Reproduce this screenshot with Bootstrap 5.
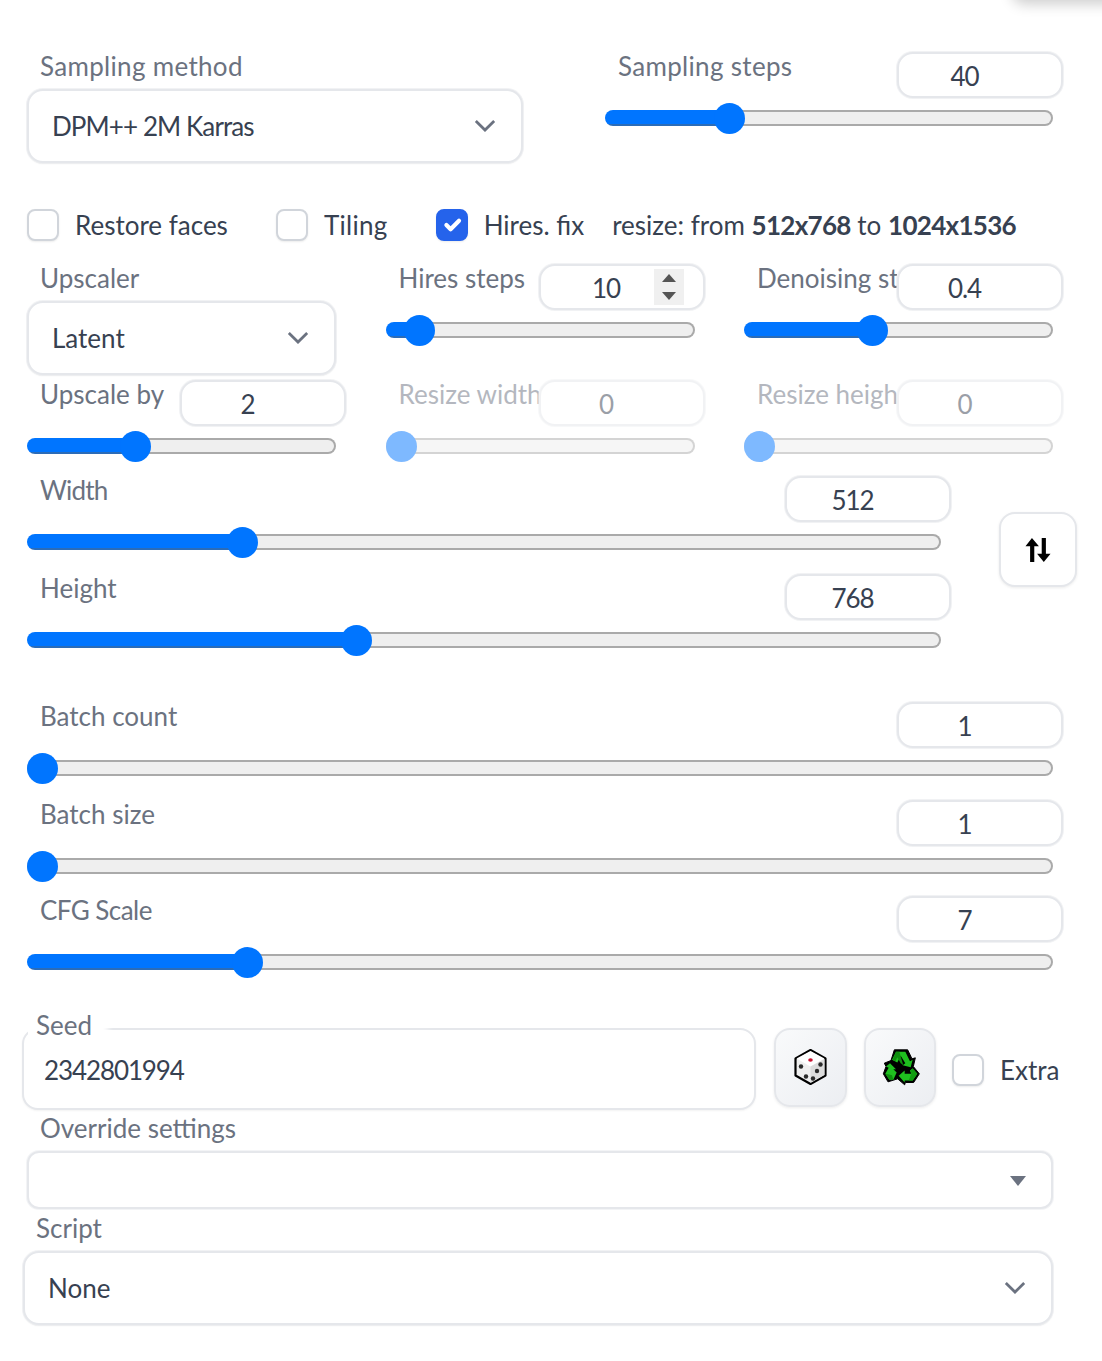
<!DOCTYPE html>
<html lang="en">
<head>
<meta charset="utf-8">
<title>txt2img settings</title>
<link href="https://cdn.jsdelivr.net/npm/bootstrap@5.3.0/dist/css/bootstrap.min.css" rel="stylesheet">
<style>
html,body{background:#fff;}
body{font-family:"Lato","Liberation Sans",sans-serif;font-size:26px;color:#374151;overflow:hidden;height:1361px;}
.pg{position:relative;width:1102px;height:1361px;padding:52px 0 0 27px;overflow:hidden;}
.corner-shade{position:absolute;top:-30px;right:-40px;width:130px;height:30px;box-shadow:0 4px 14px rgba(0,0,0,.2);background:#fff;border-radius:12px;}
.wrap{width:1026px;}
.lbl{display:block;font-size:26px;line-height:28px;color:#6b7280;margin:0;white-space:nowrap;}
.lbl-in{padding-left:13px;}
.cut{overflow:hidden;height:34px;}
.wide{letter-spacing:.32px;}
.narrow{letter-spacing:-.55px;}
.narrower{letter-spacing:-.8px;}
.sl-head{display:flex;height:46px;margin-right:-10px;}
.sl-head .lbl{flex:1 1 0;min-width:0;}
.numbox{position:relative;flex:0 0 166px;width:166px;}
.numf{display:block;width:166px;height:46px;padding:2px 31px 0 0;border:2px solid #e5e7eb;border-radius:16px;background:#fff;text-align:center;font-size:26px;letter-spacing:-1.1px;color:#374151;box-shadow:0 0 0 1px rgba(229,231,235,.55);outline:0;-moz-appearance:textfield;}
.numf::-webkit-inner-spin-button,.numf::-webkit-outer-spin-button{-webkit-appearance:none;margin:0;}
.spin{position:absolute;top:5px;right:21px;width:30px;height:36px;background:#f0f0f0;display:flex;align-items:center;justify-content:center;}
input.rng{display:block;width:100%;height:32px;margin-top:4px;padding:0;background:transparent;-webkit-appearance:none;appearance:none;}
input.rng::-webkit-slider-runnable-track{height:16px;box-sizing:border-box;border:2px solid transparent;border-radius:8px;background:linear-gradient(#0075ff calc(100% - 2px),#2b6cb8 calc(100% - 2px)) border-box 0 0/var(--p) 100% no-repeat,linear-gradient(#efefef,#efefef) padding-box,linear-gradient(#aaa,#aaa) border-box;}
input.rng::-webkit-slider-thumb{-webkit-appearance:none;appearance:none;width:31px;height:31px;margin-top:-9.5px;margin-left:-2px;border:0;border-radius:50%;background:#0075ff;box-shadow:none;}
input.rng:disabled::-webkit-slider-thumb{background:#0075ff;}
input.rng:disabled{pointer-events:none;}
.dis{opacity:.5;}
.selbox{display:block;height:74px;width:100%;padding:0 60px 0 23px;border:2px solid #e5e7eb;border-radius:16px;font-size:26px;color:#374151;box-shadow:0 0 0 1px rgba(229,231,235,.55),0 1px 2px rgba(0,0,0,.05);margin-top:9px;background-color:#fff;background-image:url("data:image/svg+xml,%3csvg xmlns='http://www.w3.org/2000/svg' viewBox='0 0 24 14'%3e%3cpath fill='none' stroke='%236b7280' stroke-width='3' d='M2 2l10 10L22 2'/%3e%3c/svg%3e");background-repeat:no-repeat;background-position:right 25px top 28px;background-size:22px 13px;}
.tight{letter-spacing:-.9px;}
.r1col{width:496px;}
.r1r{width:448px;}
.cbrow{display:flex;align-items:center;height:32px;margin-top:46px;}
.form-check-input.cb{width:32px;height:32px;margin:0;flex:none;border:2px solid #d1d5db;border-radius:8px;box-shadow:0 1px 2px rgba(0,0,0,.08);background-size:100%;}
.form-check-input.cb:checked{background-color:#2563eb;border-color:#2563eb;}
.cbt{margin:0 0 0 16px;font-size:26px;color:#374151;white-space:nowrap;}
.cbt b{font-weight:700;letter-spacing:-.7px;}
.c3{width:309px;flex:none;}
.r2{margin-top:23px;}
.r3{margin-top:5px;}
.r4{margin-top:14px;}
.mt16{margin-top:16px;}
.mt14{margin-top:14px;}
.sizecol{width:914px;flex:none;}
.swap{flex:none;width:78px;height:75px;margin:36px 0 0 58px;padding:0;background:#fff;border:2px solid #e5e7eb;border-radius:16px;box-shadow:0 1px 3px rgba(0,0,0,.08);display:flex;align-items:center;justify-content:center;}
.batch{margin-top:46px;}
.seedrow{display:flex;margin:50px 0 0 -5px;}
.seedwrap{position:relative;width:734px;flex:none;}
.seedlbl{position:absolute;left:6px;top:-17px;padding:0 10px 0 8px;height:28px;line-height:28px;background:#fff;color:#6b7280;font-size:26px;box-shadow:6px 0 6px #fff;}
.seedf{display:block;width:734px;height:82px;padding:2px 20px 0 20px;border:2px solid #e5e7eb;border-radius:16px;font-size:26px;letter-spacing:-1.1px;color:#374151;background:#fff;outline:0;box-shadow:0 1px 2px rgba(0,0,0,.05);}
.icbtn{flex:none;height:79px;padding:0;border:2px solid #e5e7eb;border-radius:16px;background:linear-gradient(to bottom right,#f9fafb,#eceef2);box-shadow:0 1px 3px rgba(0,0,0,.08);display:flex;align-items:center;justify-content:center;}
.ic1{width:73px;margin-left:18px;}
.ic2{width:72px;margin-left:17px;}
.extra{display:flex;align-items:center;height:32px;margin:26px 0 0 16px;flex:none;}
.ovr{height:58px;margin-top:9px;border:2px solid #e5e7eb;border-radius:12px;background:#fff;box-shadow:0 0 0 1px rgba(229,231,235,.45);display:flex;align-items:center;justify-content:flex-end;padding:2px 24px 0 0;}
.lbl-top{margin-top:4px;}
.lbl-script{margin:5px 0 0 9px;}
.scr{margin-left:-4px;width:1030px;}
</style>
</head>
<body>
<div class="pg">
  <div class="corner-shade"></div>
  <div class="wrap">
    <div class="d-flex justify-content-between">
      <div class="r1col">
        <label class="lbl lbl-in wide">Sampling method</label>
        <select class="form-select selbox tight"><option>DPM++ 2M Karras</option></select>
      </div>
      <div class="r1r">
        <div class="sl-head"><label class="lbl lbl-in wide">Sampling steps</label><div class="numbox"><input class="numf" type="number" value="40"></div></div>
        <input class="form-range rng" type="range" value="26.5" step="0.1" style="--p:28%">
      </div>
    </div>

    <div class="cbrow">
      <input class="form-check-input cb" type="checkbox" id="c1"><label class="cbt" for="c1">Restore faces</label>
      <input class="form-check-input cb ms-5" type="checkbox" id="c2"><label class="cbt wide" for="c2">Tiling</label>
      <input class="form-check-input cb ms-5" type="checkbox" id="c3" checked><label class="cbt" for="c3">Hires. fix</label>
      <span class="cbt ms-4 ps-1">resize: from <b>512x768</b> to <b>1024x1536</b></span>
    </div>

    <div class="d-flex justify-content-between r2">
      <div class="c3">
        <label class="lbl lbl-in">Upscaler</label>
        <select class="form-select selbox"><option>Latent</option></select>
      </div>
      <div class="c3">
        <div class="sl-head"><label class="lbl lbl-in">Hires steps</label><div class="numbox"><input class="numf" type="number" value="10">
          <span class="spin"><svg width="16" height="26" viewBox="0 0 16 26"><path fill="#555" d="M8 0l7 8H1zM1 18h14l-7 8z"/></svg></span></div></div>
        <input class="form-range rng" type="range" value="6.6" step="0.1" style="--p:10%">
      </div>
      <div class="c3">
        <div class="sl-head"><label class="lbl lbl-in cut">Denoising strength</label><div class="numbox"><input class="numf" type="number" value="0.4" step="0.1"></div></div>
        <input class="form-range rng" type="range" value="41.1" step="0.1" style="--p:41%">
      </div>
    </div>

    <div class="d-flex justify-content-between r3">
      <div class="c3">
        <div class="sl-head"><label class="lbl lbl-in">Upscale by</label><div class="numbox"><input class="numf" type="number" value="2"></div></div>
        <input class="form-range rng" type="range" value="33.8" step="0.1" style="--p:35%">
      </div>
      <div class="c3 dis">
        <div class="sl-head"><label class="lbl lbl-in cut">Resize width</label><div class="numbox"><input class="numf" type="number" value="0" disabled></div></div>
        <input class="form-range rng" type="range" value="0" disabled style="--p:0%">
      </div>
      <div class="c3 dis">
        <div class="sl-head"><label class="lbl lbl-in cut">Resize height</label><div class="numbox"><input class="numf" type="number" value="0" disabled></div></div>
        <input class="form-range rng" type="range" value="0" disabled style="--p:0%">
      </div>
    </div>

    <div class="d-flex r4">
      <div class="sizecol">
        <div class="sl-head"><label class="lbl lbl-in narrower">Width</label><div class="numbox"><input class="numf" type="number" value="512"></div></div>
        <input class="form-range rng" type="range" value="22.7" step="0.1" style="--p:23.5%">
        <div class="mt16">
          <div class="sl-head"><label class="lbl lbl-in">Height</label><div class="numbox"><input class="numf" type="number" value="768"></div></div>
          <input class="form-range rng" type="range" value="35.7" step="0.1" style="--p:36.5%">
        </div>
      </div>
      <button class="btn swap" type="button" aria-label="Swap">
        <svg width="26" height="26" viewBox="0 0 28 28"><path fill="#000" d="M7.500 1L15 10h-5v17H5.500V10H.5zM18 1h4.500v17h5L20.250 27 13 18h5z"/></svg>
      </button>
    </div>

    <div class="batch">
      <div class="sl-head"><label class="lbl lbl-in">Batch count</label><div class="numbox"><input class="numf" type="number" value="1"></div></div>
      <input class="form-range rng" type="range" value="0" style="--p:0%">
    </div>
    <div class="mt16">
      <div class="sl-head"><label class="lbl lbl-in">Batch size</label><div class="numbox"><input class="numf" type="number" value="1"></div></div>
      <input class="form-range rng" type="range" value="0" style="--p:0%">
    </div>
    <div class="mt14">
      <div class="sl-head"><label class="lbl lbl-in narrow">CFG Scale</label><div class="numbox"><input class="numf" type="number" value="7"></div></div>
      <input class="form-range rng" type="range" value="20.7" step="0.1" style="--p:21.5%">
    </div>

    <div class="seedrow">
      <div class="seedwrap">
        <input class="seedf" type="text" value="2342801994">
        <span class="seedlbl">Seed</span>
      </div>
      <button class="btn icbtn ic1" type="button" aria-label="Random seed">
        <svg width="50" height="50" viewBox=".5 2.500 50 50"><path d="M25 9.500L40 18V35L25 43.500 10 35V18z" fill="#efefef" stroke="#000" stroke-width="2.200" stroke-linejoin="round"/><path d="M11 18L25 10.500 39 18 25 26z" fill="#fff"/><path d="M25 26L39 18.500V34.500L25 42.500z" fill="#dcdcdc"/><ellipse cx="25" cy="19.500" rx="2.300" ry="1.700" fill="#c8102e"/><circle cx="15.500" cy="26" r="2.200" fill="#2b2b2b"/><circle cx="20.500" cy="36" r="2.200" fill="#2b2b2b"/><circle cx="35" cy="24" r="2.200" fill="#2b2b2b"/><circle cx="31.500" cy="30.500" r="2.200" fill="#2b2b2b"/><circle cx="27.500" cy="38" r="2.200" fill="#2b2b2b"/></svg>
      </button>
      <button class="btn icbtn ic2" type="button" aria-label="Reuse seed">
        <svg width="50" height="50" viewBox="-3 7.500 150 150"><path d="M55 28h40l13 27 10-3-6 26 18 22-17 26H88l-2 7-21-18-29 9-14-24 8-22-5-10 20-8z" fill="#000" stroke="#000" stroke-width="3" stroke-linejoin="round"/><path d="M60 34h28l14 28 8-4-6 22-24-6 8-6-14-22-10 20-16-8z" fill="#1fc01f"/><path d="M60 34h10l12 40-8-6-10-18-6 12-8-4z" fill="#0e8f0e"/><path d="M110 84l14 16-14 20H86v6l-18-20 18-16v10h20l-4-10z" fill="#1fc01f"/><path d="M110 84l14 16-14 20H98l8-20-4-10z" fill="#119c11"/><path d="M42 68l18 18-8 0 10 10-10 22H40L28 100l10-18-8-4z" fill="#1fc01f"/><path d="M28 100l12 18h12l-4-14-8-2z" fill="#0e8f0e"/></svg>
      </button>
      <div class="extra"><input class="form-check-input cb" type="checkbox" id="c4"><label class="cbt" for="c4">Extra</label></div>
    </div>

    <label class="lbl lbl-in lbl-top">Override settings</label>
    <div class="ovr"><svg width="18" height="10" viewBox="0 0 18 10"><path fill="#6b7280" d="M1 0h16L9 10z"/></svg></div>
    <label class="lbl lbl-script">Script</label>
    <select class="form-select selbox scr"><option>None</option></select>
  </div>
</div>
<script src="https://cdn.jsdelivr.net/npm/bootstrap@5.3.0/dist/js/bootstrap.bundle.min.js"></script>
</body>
</html>
